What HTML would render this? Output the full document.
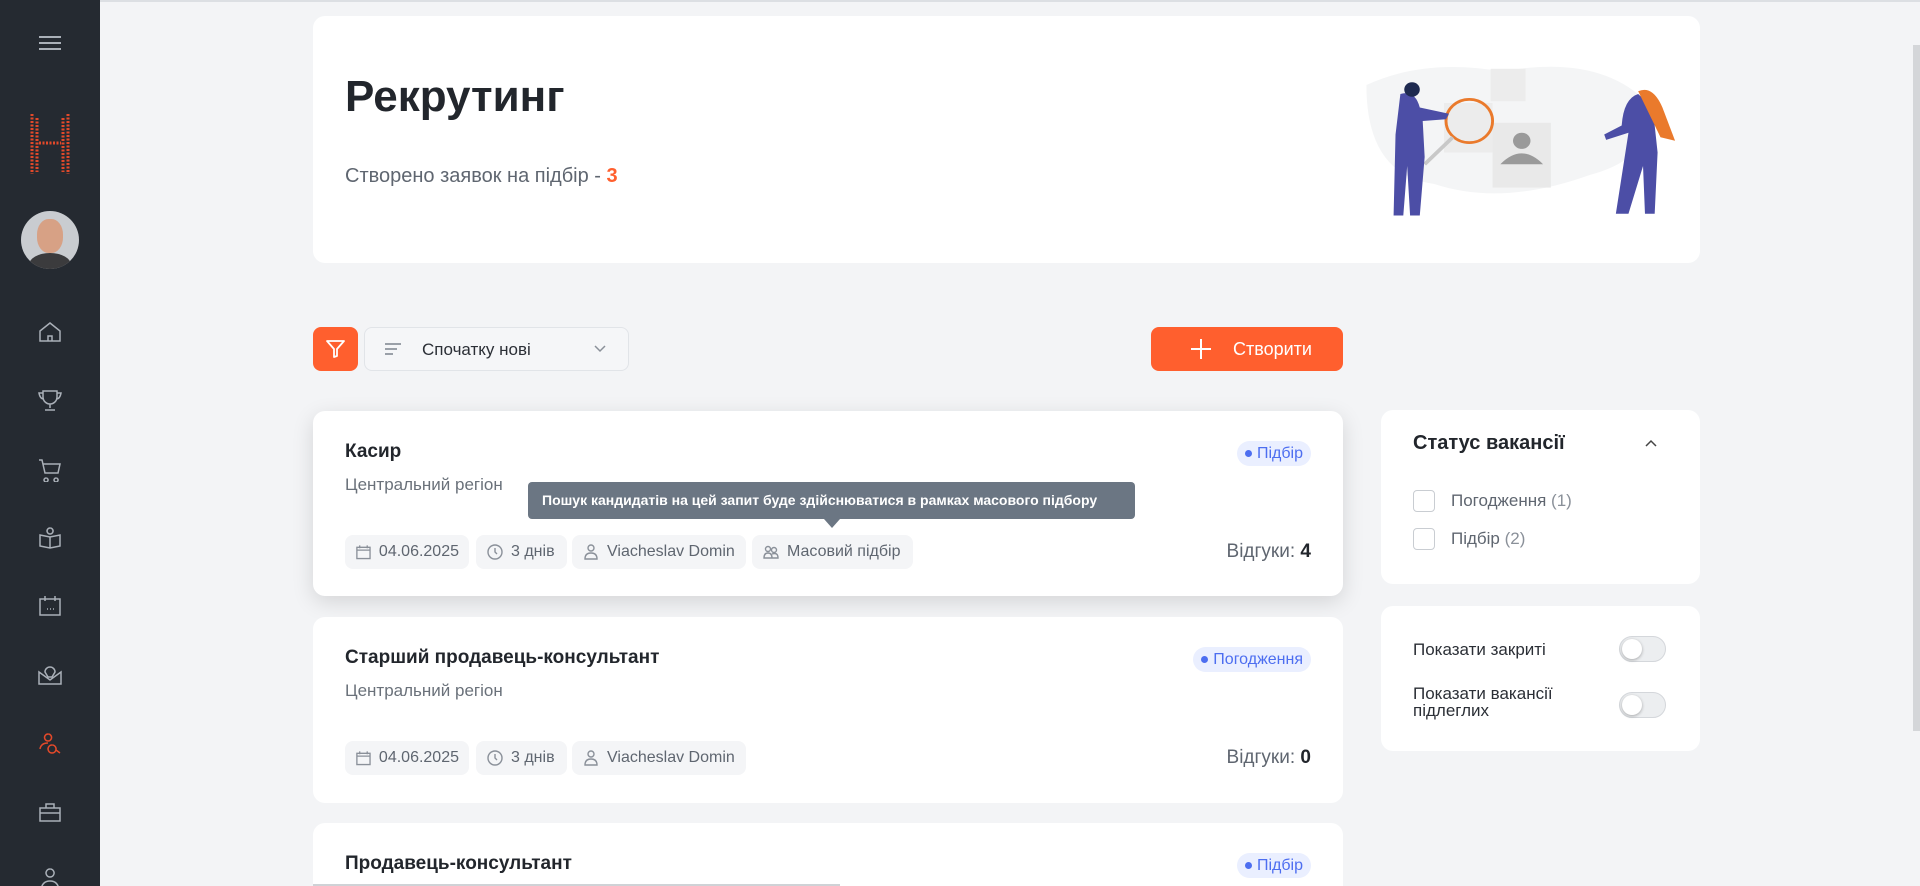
<!DOCTYPE html>
<html><head><meta charset="utf-8">
<style>
*{box-sizing:border-box;margin:0;padding:0}
html{width:1920px;height:886px;overflow:hidden}
body{width:1920px;height:886px;overflow:hidden;background:#f3f4f6;font-family:"Liberation Sans","Noto Sans CJK SC",sans-serif;color:#2b2f36;position:relative}
.abs{position:absolute}
.side{left:0;top:0;width:100px;height:886px;background:#252a31}
.topline{left:0;top:0;width:1920px;height:2px;background:#dcdfe3}
.card{background:#fff;border-radius:12px}
.chip{position:absolute;top:124px;height:34px;background:#f4f5f7;border-radius:8px;font-size:16px;color:#5f6670;display:flex;align-items:center;padding:0 10px;gap:7px;white-space:nowrap}
.title{position:absolute;left:32px;top:30px;font-size:19px;font-weight:bold;color:#22262c}
.region{position:absolute;left:32px;top:64px;font-size:17px;color:#6a717a}
.badge{position:absolute;right:32px;top:30px;height:25px;background:#eaefff;color:#4d6ef0;border-radius:13px;font-size:16px;padding:0 8px;display:flex;align-items:center;gap:5px}
.badge:before{content:"";width:7px;height:7px;border-radius:50%;background:#4d6ef0}
.resp{position:absolute;right:32px;top:130px;font-size:19px;color:#5f6670}
.resp b{color:#22262c}
svg.ic{width:18px;height:18px;fill:none;stroke:#8a9099;stroke-width:1.4}
.sicon{position:absolute;left:37px;width:26px;height:26px;fill:none;stroke:#aab0b8;stroke-width:1.5}
.cb{position:absolute;left:32px;width:22px;height:22px;border:1.5px solid #c9cdd2;border-radius:4px}
.tg{position:absolute;right:34px;width:47px;height:26px;border-radius:13px;background:#eceef0;border:1px solid #d4d7db}
.tg:after{content:"";position:absolute;left:2px;top:2px;width:20px;height:20px;border-radius:50%;background:#fff;box-shadow:0 1px 3px rgba(0,0,0,.3)}
</style></head><body>
<div class="abs topline"></div>
<div class="abs side">
 <div class="abs" style="left:39px;top:36px;width:22px;height:2px;background:#aab0b8;box-shadow:0 6px 0 #aab0b8,0 12px 0 #aab0b8"></div>
 <svg class="abs" style="left:28px;top:112px" width="44" height="64" viewBox="0 0 44 64">
  <g fill="none" stroke="#e2492a" stroke-width="3" stroke-dasharray="2 1.5">
   <line x1="4" y1="2" x2="4" y2="62"/><line x1="9" y1="6" x2="9" y2="60"/><line x1="35" y1="6" x2="35" y2="60"/><line x1="40" y1="2" x2="40" y2="62"/><line x1="11" y1="31" x2="33" y2="31"/>
  </g></svg>
 <div class="abs" style="left:21px;top:211px;width:58px;height:58px;border-radius:50%;background:#c9ccd0;overflow:hidden">
  <div class="abs" style="left:16px;top:8px;width:26px;height:34px;border-radius:45%;background:#d7a185"></div>
  <div class="abs" style="left:8px;top:42px;width:42px;height:24px;border-radius:50% 50% 0 0;background:#3b3b3d"></div>
 </div>
 <svg class="sicon" style="top:319px" viewBox="0 0 26 26"><path d="M3 12 L13 4 L23 12 V22 H3 Z M11 22 V17 H15 V22"/></svg>
 <svg class="sicon" style="top:387px" viewBox="0 0 26 26"><path d="M6 4 H20 V10 A7 7 0 0 1 6 10 Z M6 6 H2 Q3 12 7 12 M20 6 H24 Q23 12 19 12 M13 17 V21 M8 23 H18"/></svg>
 <svg class="sicon" style="top:456px" viewBox="0 0 26 26"><path d="M2 4 H5 L8 17 H21 L23 8 H6 M9 22 a2 2 0 1 0 .1 0 M19 22 a2 2 0 1 0 .1 0"/></svg>
 <svg class="sicon" style="top:525px" viewBox="0 0 26 26"><path d="M13 3 a3 3 0 1 0 .1 0 M3 10 L13 12 L23 10 V21 L13 23 L3 21 Z M13 12 V23"/></svg>
 <svg class="sicon" style="top:593px" viewBox="0 0 26 26"><path d="M3 6 H23 V22 H3 Z M8 3 V8 M18 3 V8 M10 16 h1 M13 16 h1 M16 16 h1"/></svg>
 <svg class="sicon" style="top:662px" viewBox="0 0 26 26"><path d="M2 10 L13 18 L24 10 V22 H2 Z M8 10 A5 5 0 0 1 18 10 L15 15 H11 Z"/></svg>
 <svg class="sicon" style="top:730px;stroke:#e2492a" viewBox="0 0 26 26"><path d="M11 4 a3.5 3.5 0 1 0 .1 0 M3 19 Q4 13 11 13 M15 15 a4 4 0 1 0 .1 0 M19 20 L23 23"/></svg>
 <svg class="sicon" style="top:799px" viewBox="0 0 26 26"><path d="M3 9 H23 V22 H3 Z M9 9 V5 H17 V9 M3 14 H23"/></svg>
 <svg class="sicon" style="top:866px" viewBox="0 0 26 26"><path d="M13 3 a4 4 0 1 0 .1 0 M4 24 Q5 15 13 15 Q21 15 22 24"/></svg>
</div>

<div class="abs card" style="left:313px;top:16px;width:1387px;height:247px">
 <div class="abs" style="left:32px;top:56px;font-size:44px;font-weight:bold;color:#22262c">Рекрутинг</div>
 <div class="abs" style="left:32px;top:149px;font-size:20px;color:#5f6670">Створено заявок на підбір - <b style="color:#ff5f2e">3</b></div>
 <svg class="abs" style="left:1034px;top:33px" width="330" height="180" viewBox="0 0 340 200" preserveAspectRatio="none">
  <path d="M20 40 Q80 10 160 25 Q260 5 310 60 Q320 120 250 140 Q160 175 90 150 Q20 140 20 40Z" fill="#f4f5f6"/>
  <rect x="100" y="60" width="50" height="55" fill="#ececec"/><rect x="148" y="22" width="36" height="36" fill="#ececec"/>
  <rect x="150" y="82" width="60" height="72" fill="#e9e9e9"/><path d="M158 128 Q180 104 202 128Z M180 93 a9 9 0 1 0 .1 0" fill="#9a9a9a"/>
  <circle cx="126" cy="80" r="24" fill="none" stroke="#ea7a2c" stroke-width="3"/><line x1="109" y1="98" x2="80" y2="128" stroke="#c8c8c8" stroke-width="4"/>
  <path d="M55 50 Q70 45 75 65 L105 72 L102 78 L78 80 L80 120 L75 185 L65 185 L62 130 L58 185 L48 185 L50 95 Z" fill="#4c4ea6"/>
  <circle cx="67" cy="45" r="8" fill="#1e2a50"/>
  <path d="M300 50 Q285 55 283 85 L265 95 L267 101 L290 93 L277 183 L290 183 L305 130 L307 183 L317 183 L320 115 L315 65 Z" fill="#4c4ea6"/>
  <path d="M300 47 Q315 40 325 65 L338 102 L323 98 Z" fill="#ea7a2c"/>
 </svg>
</div>

<div class="abs" style="left:313px;top:327px;width:45px;height:44px;background:#ff5f2e;border-radius:8px"><svg style="position:absolute;left:12px;top:12px" width="21" height="20" viewBox="0 0 21 20"><path d="M2 2 H19 L12 10 V17 L9 18 V10 Z" fill="none" stroke="#fff" stroke-width="1.8" stroke-linejoin="round"/></svg></div>
<div class="abs" style="left:364px;top:327px;width:265px;height:44px;background:#f5f6f8;border:1px solid #e1e4e8;border-radius:8px">
 <div class="abs" style="left:20px;top:15px;width:16px;height:2px;background:#9aa0a8"></div>
 <div class="abs" style="left:20px;top:20px;width:12px;height:2px;background:#9aa0a8"></div>
 <div class="abs" style="left:20px;top:25px;width:8px;height:2px;background:#9aa0a8"></div>
 <div class="abs" style="left:57px;top:12px;font-size:17px;color:#2b2f36">Спочатку нові</div>
 <svg class="abs" style="left:228px;top:16px" width="14" height="10"><path d="M2 2 L7 7 L12 2" fill="none" stroke="#8a9099" stroke-width="1.5"/></svg>
</div>
<div class="abs" style="left:1151px;top:327px;width:192px;height:44px;background:#ff5f2e;border-radius:8px;color:#fff;font-size:18px">
 <div class="abs" style="left:40px;top:21px;width:20px;height:2px;background:#fff"></div><div class="abs" style="left:49px;top:12px;width:2px;height:20px;background:#fff"></div>
 <div class="abs" style="left:82px;top:12px">Створити</div>
</div>

<div class="abs card" style="left:313px;top:411px;width:1030px;height:185px;box-shadow:0 6px 22px rgba(0,0,0,.13)">
 <div class="title">Касир</div><div class="region">Центральний регіон</div>
 <div class="badge">Підбір</div>
 <div class="chip" style="left:32px;width:124px"><svg class="ic" viewBox="0 0 18 18"><path d="M2 4 H16 V16 H2 Z M2 7 H16 M5 2 V5 M13 2 V5"/></svg>04.06.2025</div>
 <div class="chip" style="left:163px;width:91px"><svg class="ic" viewBox="0 0 18 18"><circle cx="9" cy="9" r="7"/><path d="M9 5 V9 L11 11"/></svg>3 днів</div>
 <div class="chip" style="left:259px;width:174px"><svg class="ic" viewBox="0 0 18 18"><circle cx="9" cy="5" r="3"/><path d="M3 16 Q3 10 9 10 Q15 10 15 16 Z"/></svg>Viacheslav Domin</div>
 <div class="chip" style="left:439px;width:161px"><svg class="ic" viewBox="0 0 18 18"><circle cx="6" cy="6" r="2.5"/><circle cx="12" cy="7" r="2.5"/><path d="M2 15 Q2 10 6 10 Q10 10 10 15Z M10 11 Q16 9 16 15 H10"/></svg>Масовий підбір</div>
 <div class="resp">Відгуки: <b>4</b></div>
 <div class="abs" style="left:215px;top:71px;width:607px;height:37px;background:#6b7683;border-radius:4px;color:#fff;font-size:14px;font-weight:bold;line-height:37px;padding-left:14px;white-space:nowrap">Пошук кандидатів на цей запит буде здійснюватися в рамках масового підбору</div>
 <div class="abs" style="left:511px;top:108px;width:0;height:0;border-left:8px solid transparent;border-right:8px solid transparent;border-top:9px solid #6b7683"></div>
</div>

<div class="abs card" style="left:313px;top:617px;width:1030px;height:186px">
 <div class="title">Старший продавець-консультант</div><div class="region">Центральний регіон</div>
 <div class="badge">Погодження</div>
 <div class="chip" style="left:32px;width:124px"><svg class="ic" viewBox="0 0 18 18"><path d="M2 4 H16 V16 H2 Z M2 7 H16 M5 2 V5 M13 2 V5"/></svg>04.06.2025</div>
 <div class="chip" style="left:163px;width:91px"><svg class="ic" viewBox="0 0 18 18"><circle cx="9" cy="9" r="7"/><path d="M9 5 V9 L11 11"/></svg>3 днів</div>
 <div class="chip" style="left:259px;width:174px"><svg class="ic" viewBox="0 0 18 18"><circle cx="9" cy="5" r="3"/><path d="M3 16 Q3 10 9 10 Q15 10 15 16 Z"/></svg>Viacheslav Domin</div>
 <div class="resp">Відгуки: <b>0</b></div>
</div>

<div class="abs" style="left:313px;top:823px;width:1030px;height:63px;background:#fff;border-radius:12px 12px 0 0;overflow:hidden">
 <div class="title">Продавець-консультант</div>
 <div class="badge">Підбір</div>
</div>
<div class="abs" style="left:313px;top:884px;width:527px;height:2px;background:#cfd2d6"></div>

<div class="abs card" style="left:1381px;top:410px;width:319px;height:174px">
 <div class="abs" style="left:32px;top:22px;font-size:20px;font-weight:bold;color:#22262c">Статус вакансії</div>
 <svg class="abs" style="left:263px;top:28px" width="14" height="10"><path d="M2 8 L7 3 L12 8" fill="none" stroke="#444" stroke-width="1.5"/></svg>
 <div class="cb" style="top:80px"></div><div class="abs" style="left:70px;top:81px;font-size:17px;color:#5f6670">Погодження <span style="color:#8a9099">(1)</span></div>
 <div class="cb" style="top:118px"></div><div class="abs" style="left:70px;top:119px;font-size:17px;color:#5f6670">Підбір <span style="color:#8a9099">(2)</span></div>
</div>
<div class="abs card" style="left:1381px;top:606px;width:319px;height:145px">
 <div class="abs" style="left:32px;top:34px;font-size:17px;color:#2b2f36">Показати закриті</div>
 <div class="tg" style="top:30px"></div>
 <div class="abs" style="left:32px;top:79px;font-size:17px;line-height:17px;color:#2b2f36">Показати вакансії<br>підлеглих</div>
 <div class="tg" style="top:86px"></div>
</div>
<div class="abs" style="left:1913px;top:45px;width:7px;height:686px;background:#d4d6d9"></div>
</body></html>
